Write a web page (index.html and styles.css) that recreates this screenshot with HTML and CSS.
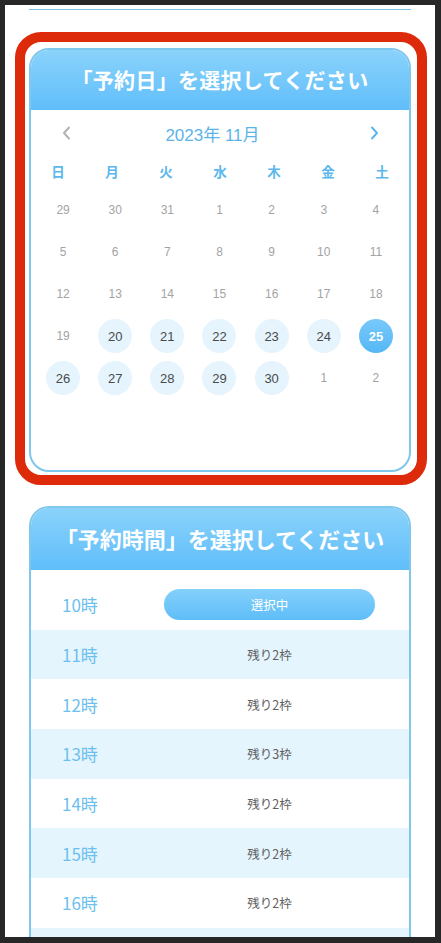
FILE: index.html
```html
<!DOCTYPE html>
<html lang="ja">
<head>
<meta charset="utf-8">
<title>予約</title>
<link rel="stylesheet" href="styles.css">
</head>
<body>
<div class="screen">
  <div class="topline"></div>

  <div class="highlight">
    <section class="card">
      <h2 class="card-head">「予約日」を選択してください</h2>
      <div class="cal">
        <div class="cal-nav">
          <span class="arrow prev"><svg width="9" height="14" viewBox="0 0 9 14"><path d="M7 1.5 L2 7 L7 12.5" fill="none" stroke="#b3b3b3" stroke-width="2" stroke-linecap="round" stroke-linejoin="round"/></svg></span>
          <span class="cal-title">2023年 11月</span>
          <span class="arrow next"><svg width="9" height="14" viewBox="0 0 9 14"><path d="M2 1.5 L7 7 L2 12.5" fill="none" stroke="#5cb6ea" stroke-width="2" stroke-linecap="round" stroke-linejoin="round"/></svg></span>
        </div>
        <div class="weekdays">
          <span>日</span><span>月</span><span>火</span><span>水</span><span>木</span><span>金</span><span>土</span>
        </div>
        <div class="days">
          <span class="d">29</span><span class="d">30</span><span class="d">31</span><span class="d">1</span><span class="d">2</span><span class="d">3</span><span class="d">4</span>
          <span class="d">5</span><span class="d">6</span><span class="d">7</span><span class="d">8</span><span class="d">9</span><span class="d">10</span><span class="d">11</span>
          <span class="d">12</span><span class="d">13</span><span class="d">14</span><span class="d">15</span><span class="d">16</span><span class="d">17</span><span class="d">18</span>
          <span class="d">19</span><span class="d"><b class="av">20</b></span><span class="d"><b class="av">21</b></span><span class="d"><b class="av">22</b></span><span class="d"><b class="av">23</b></span><span class="d"><b class="av">24</b></span><span class="d"><b class="av sel">25</b></span>
          <span class="d"><b class="av">26</b></span><span class="d"><b class="av">27</b></span><span class="d"><b class="av">28</b></span><span class="d"><b class="av">29</b></span><span class="d"><b class="av">30</b></span><span class="d">1</span><span class="d">2</span>
        </div>
      </div>
    </section>
  </div>

  <section class="card card-time">
    <h2 class="card-head wide">「予約時間」を選択してください</h2>
    <div class="slots">
      <div class="slot"><span class="hour">10時</span><span class="val"><span class="pill">選択中</span></span></div>
      <div class="slot alt"><span class="hour">11時</span><span class="val">残り2枠</span></div>
      <div class="slot"><span class="hour">12時</span><span class="val">残り2枠</span></div>
      <div class="slot alt"><span class="hour">13時</span><span class="val">残り3枠</span></div>
      <div class="slot"><span class="hour">14時</span><span class="val">残り2枠</span></div>
      <div class="slot alt"><span class="hour">15時</span><span class="val">残り2枠</span></div>
      <div class="slot"><span class="hour">16時</span><span class="val">残り2枠</span></div>
      <div class="slot alt"></div>
    </div>
  </section>
</div>
</body>
</html>
```

FILE: styles.css
```css
* { box-sizing: border-box; }

html, body {
  margin: 0;
  padding: 0;
  background: #272727;
}

body {
  font-family: "Liberation Sans", "Noto Sans CJK JP", sans-serif;
  width: 441px;
  height: 943px;
  overflow: hidden;
}

.screen {
  margin: 5px 6px 0 5px;
  width: 430px;
  height: 932px;
  background: #ffffff;
  padding: 0 24px;
  overflow: hidden;
}

.topline {
  height: 1px;
  margin-top: 4px;
  background: #7cc3e3;
}

.highlight {
  margin: 22px -16px 0 -14px;
  border: 10px solid #dd2a0b;
  border-radius: 26px;
  padding: 6px 6px 3px 4px;
}

.card {
  border: 2px solid #80c7ec;
  border-radius: 20px;
  overflow: hidden;
  background: #fff;
}

.card-head {
  margin: 0;
  height: 60px;
  display: flex;
  align-items: center;
  justify-content: center;
  background: linear-gradient(#8ad2fb, #60befa);
  color: #ffffff;
  font-family: "Noto Sans CJK JP", sans-serif;
  font-weight: 700;
  font-size: 21px;
  letter-spacing: 0.3px;
  padding-bottom: 2px;
}

.card-head.wide {
  font-size: 22px;
  letter-spacing: 0;
}

.cal {
  padding: 12px 0 71px;
}

.cal-nav {
  height: 22px;
  display: flex;
  align-items: center;
  justify-content: space-between;
  padding: 0 30px 0 31px;
}

.arrow {
  display: flex;
  width: 9px;
  height: 14px;
}

.cal-title {
  color: #5ab4e8;
  font-size: 17px;
  margin-right: 16px;
}

.weekdays {
  margin-top: 17px;
  height: 20px;
  display: grid;
  grid-template-columns: repeat(7, 1fr);
  align-items: center;
}

.weekdays span {
  text-align: center;
  color: #5cb8ec;
  font-family: "Noto Sans CJK JP", sans-serif;
  font-weight: 700;
  font-size: 13.5px;
}

.days {
  margin-top: 8px;
  display: grid;
  grid-template-columns: repeat(7, 1fr);
  grid-auto-rows: 42px;
  padding: 0 7px 0 6px;
}

.d {
  display: flex;
  align-items: center;
  justify-content: center;
  color: #a3a3a3;
  font-size: 12px;
}

.av {
  width: 34px;
  height: 34px;
  border-radius: 50%;
  background: #e5f4fd;
  color: #4a4a4a;
  font-weight: 400;
  font-size: 13px;
  display: flex;
  align-items: center;
  justify-content: center;
}

.av.sel {
  background: linear-gradient(#79c9fa, #55b7f5);
  color: #ffffff;
  font-weight: 700;
}

.card-time {
  margin-top: 21px;
  border-bottom: none;
  border-radius: 20px 20px 0 0;
}

.card-time .card-head {
  height: 62px;
}

.slots {
  padding-top: 10px;
}

.slot {
  height: 49.7px;
  display: flex;
  align-items: center;
  padding: 0 34px 0 31px;
}

.slot.alt {
  background: #e5f5fe;
}

.hour {
  width: 102px;
  color: #6cc0ee;
  font-family: "Noto Sans CJK JP", sans-serif;
  font-size: 17px;
}

.val {
  flex: 1;
  display: flex;
  justify-content: center;
  color: #606060;
  font-family: "Noto Sans CJK JP", sans-serif;
  font-size: 12.5px;
}

.pill {
  width: 100%;
  height: 31px;
  border-radius: 16px;
  background: linear-gradient(#84d0fb, #5ebdf8);
  color: #ffffff;
  font-size: 12.5px;
  display: flex;
  align-items: center;
  justify-content: center;
}
```
